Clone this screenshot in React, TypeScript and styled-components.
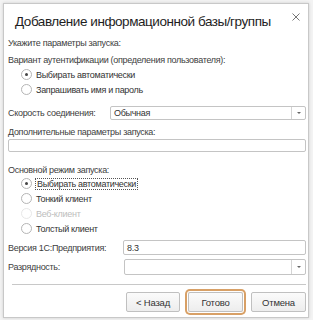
import React from "react";
import styled, { createGlobalStyle } from "styled-components";

const FONT = `"Liberation Sans", Arial, sans-serif`;

const GlobalStyle = createGlobalStyle`
  html, body {
    margin: 0;
    padding: 0;
    background: #f3f3f3;
    font-family: ${FONT};
  }
`;

const Page = styled.div`
  width: 313px;
  height: 320px;
  padding: 3px 0 0 3px;
  box-sizing: border-box;
`;

const Dialog = styled.div`
  width: 306px;
  height: 315px;
  box-sizing: border-box;
  background: #fff;
  border: 1px solid #c8c8c8;
  box-shadow: 0 0 3px rgba(0, 0, 0, 0.15);
  display: flex;
  flex-direction: column;
  padding: 0 2px 0 4px;
  font-size: 9px;
  letter-spacing: -0.3px;
  color: #404040;
`;

const TitleBar = styled.div`
  display: flex;
  align-items: center;
  justify-content: space-between;
  height: 34px;
  padding: 0 6px 0 7px;
`;

const Title = styled.div`
  font-size: 13.5px;
  letter-spacing: -0.45px;
  color: #1e1e1e;
  white-space: nowrap;
`;

const Close = styled.svg`
  margin-top: -9px;
`;

const Label = styled.div<{ $mt?: number }>`
  height: 10px;
  margin-top: ${(p) => p.$mt ?? 0}px;
  display: flex;
  align-items: center;
  white-space: nowrap;
`;

const RadioRow = styled.div<{ $disabled?: boolean; $mt?: number }>`
  height: 15px;
  margin-top: ${(p) => p.$mt ?? 0}px;
  display: flex;
  align-items: center;
  gap: 4px;
  padding-left: 13px;
  color: ${(p) => (p.$disabled ? "#bdbdbd" : "#333")};
`;

const Circle = styled.span<{ $checked?: boolean; $disabled?: boolean }>`
  width: 11px;
  height: 11px;
  box-sizing: border-box;
  border-radius: 50%;
  border: 1px solid ${(p) => (p.$disabled ? "#e8e8e8" : "#b5b5b5")};
  background: #fff;
  display: flex;
  align-items: center;
  justify-content: center;
  &::after {
    content: "";
    width: 3px;
    height: 3px;
    border-radius: 50%;
    background: ${(p) => (p.$checked ? "#444" : "transparent")};
  }
`;

const Focused = styled.span`
  outline: 1px dotted #555;
  padding: 0 1px;
`;

const FieldRow = styled.div<{ $h: number; $mt: number; $labelW: number }>`
  height: ${(p) => p.$h}px;
  margin-top: ${(p) => p.$mt}px;
  display: grid;
  grid-template-columns: ${(p) => p.$labelW}px 1fr;
  align-items: stretch;
`;

const FieldLabel = styled.span`
  display: flex;
  align-items: center;
  white-space: nowrap;
`;

const Box = styled.div<{ $h?: number; $mt?: number }>`
  height: ${(p) => (p.$h ? `${p.$h}px` : "auto")};
  margin-top: ${(p) => p.$mt ?? 0}px;
  box-sizing: border-box;
  border: 1px solid #c4c4c4;
  border-radius: 2px;
  display: flex;
  align-items: stretch;
  color: #333;
  background: #fff;
`;

const BoxText = styled.div`
  flex: 1;
  display: flex;
  align-items: center;
  padding-left: 3px;
`;

const DropBtn = styled.div`
  width: 13px;
  border-left: 1px solid #d4d4d4;
  display: flex;
  align-items: center;
  justify-content: center;
  &::after {
    content: "";
    border-left: 2px solid transparent;
    border-right: 2px solid transparent;
    border-top: 2px solid #666;
  }
`;

const Separator = styled.div`
  height: 1px;
  background: #c8c8c8;
  margin: 9px 0 0 4px;
`;

const Buttons = styled.div`
  display: flex;
  justify-content: flex-end;
  gap: 8px;
  margin-top: 7px;
`;

const Button = styled.button<{ $w: number; $default?: boolean }>`
  width: ${(p) => p.$w}px;
  height: 20px;
  box-sizing: border-box;
  font-family: ${FONT};
  font-size: 9.5px;
  letter-spacing: -0.2px;
  color: #333;
  border-radius: 2px;
  background: linear-gradient(#fbfbfb, #ededed);
  border: 1px solid #c0c0c0;
  box-shadow: ${(p) => (p.$default ? "0 0 0 1px #fff, 0 0 0 3px #d8a066" : "none")};
  padding: 0;
`;

function Radio({ label, checked, disabled, focus, mt }: { label: string; checked?: boolean; disabled?: boolean; focus?: boolean; mt?: number }) {
  return (
    <RadioRow $disabled={disabled} $mt={mt}>
      <Circle $checked={checked} $disabled={disabled} />
      {focus ? <Focused>{label}</Focused> : <span>{label}</span>}
    </RadioRow>
  );
}

export default function App() {
  return (
    <Page>
      <GlobalStyle />
      <Dialog>
        <TitleBar>
          <Title>Добавление информационной базы/группы</Title>
          <Close width="8" height="8" viewBox="0 0 8 8">
            <path d="M0.5 0.5 L7.5 7.5 M7.5 0.5 L0.5 7.5" stroke="#777" strokeWidth="1" fill="none" />
          </Close>
        </TitleBar>
        <Label>Укажите параметры запуска:</Label>
        <Label $mt={7}>Вариант аутентификации (определения пользователя):</Label>
        <Radio label="Выбирать автоматически" checked mt={2} />
        <Radio label="Запрашивать имя и пароль" />
        <FieldRow $labelW={102} $h={14} $mt={9}>
          <FieldLabel>Скорость соединения:</FieldLabel>
          <Box>
            <BoxText>Обычная</BoxText>
            <DropBtn />
          </Box>
        </FieldRow>
        <Label $mt={7}>Дополнительные параметры запуска:</Label>
        <Box $h={13} $mt={2}>
          <BoxText />
        </Box>
        <Label $mt={13}>Основной режим запуска:</Label>
        <Radio label="Выбирать автоматически" checked focus mt={1} />
        <Radio label="Тонкий клиент" />
        <Radio label="Веб-клиент" disabled />
        <Radio label="Толстый клиент" />
        <FieldRow $labelW={115} $h={15} $mt={4}>
          <FieldLabel>Версия 1С:Предприятия:</FieldLabel>
          <Box>
            <BoxText>8.3</BoxText>
          </Box>
        </FieldRow>
        <FieldRow $labelW={116} $h={16} $mt={4}>
          <FieldLabel>Разрядность:</FieldLabel>
          <Box>
            <BoxText />
            <DropBtn />
          </Box>
        </FieldRow>
        <Separator />
        <Buttons>
          <Button $w={54}>&lt; Назад</Button>
          <Button $w={55} $default>Готово</Button>
          <Button $w={55}>Отмена</Button>
        </Buttons>
      </Dialog>
    </Page>
  );
}
